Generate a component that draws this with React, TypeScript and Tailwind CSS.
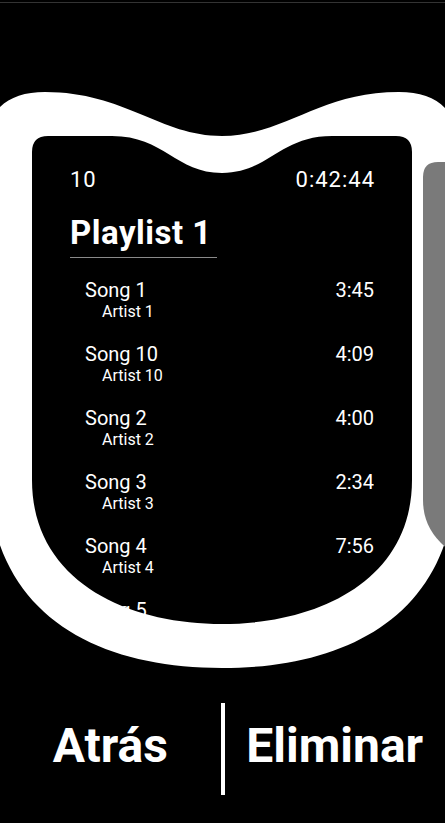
import React from "react";

type Song = {
  title: string;
  artist: string;
  duration: string;
};

const songs: Song[] = [
  { title: "Song 1", artist: "Artist 1", duration: "3:45" },
  { title: "Song 10", artist: "Artist 10", duration: "4:09" },
  { title: "Song 2", artist: "Artist 2", duration: "4:00" },
  { title: "Song 3", artist: "Artist 3", duration: "2:34" },
  { title: "Song 4", artist: "Artist 4", duration: "7:56" },
  { title: "Song 5", artist: "Artist 5", duration: "3:21" },
];

const CardFrame = () => {
  return (
    <svg
      className="pointer-events-none absolute left-0 top-0 z-10"
      width="445"
      height="700"
      viewBox="0 0 445 700"
    >
      {/* white frame with the card cut out of it */}
      <path
        fillRule="evenodd"
        fill="#ffffff"
        d="M -12 140 C -12 108 10 92 45 92 C 125 92 160 136 222 136 C 284 136 319 92 399 92 C 434 92 456 108 456 140 L 456 470 C 456 610 354 668 222 668 C 90 668 -12 610 -12 470 Z
           M 32 152 Q 32 136 48 136 L 112 136 C 164 136 176 173 222 173 C 268 173 280 136 332 136 L 396 136 Q 412 136 412 152 L 412 480 C 412 580 319 624 222 624 C 125 624 32 580 32 480 Z"
      />
      {/* next playlist peeking in */}
      <path
        fill="#7a7a7a"
        d="M 423 177 Q 423 162 438 162 L 470 162 L 470 560 L 452 552 Q 423 532 423 500 Z"
      />
    </svg>
  );
};

const App = () => {
  const [selected] = React.useState(0);

  return (
    <div className="relative w-[445px] h-[823px] overflow-hidden bg-black text-white font-['Roboto','Noto_Sans',sans-serif]">
      <div className="h-[2px]" />
      <div className="h-px bg-[#333333]" />

      <div className="h-[700px]">
        <div className="pt-[165px] pl-[70px] pr-[71px]">
          <div className="flex justify-between text-[22px] leading-[24px] tracking-[1px]">
            <span>10</span>
            <span className="mr-[-1px]">0:42:44</span>
          </div>
          <h1 className="mt-[22px] w-[147px] border-b border-[#8a8a8a] pb-[6px] text-[33px] leading-[37px] font-bold tracking-[0.5px]">
            Playlist {selected + 1}
          </h1>
          <ul className="mt-[20px] h-[362px] overflow-hidden flex flex-col gap-[20px]">
            {songs.map((song) => (
              <li key={song.title} className="flex justify-between pl-[15px]">
                <div className="flex flex-col">
                  <span className="text-[20px] leading-[24px]">{song.title}</span>
                  <span className="pl-[17px] text-[16px] leading-[20px]">{song.artist}</span>
                </div>
                <span className="text-[20px] leading-[24px]">{song.duration}</span>
              </li>
            ))}
          </ul>
        </div>
      </div>

      <CardFrame />

      <div className="flex h-[92px] items-stretch">
        <button type="button" className="flex flex-1 items-center justify-center">
          <span className="mb-[6px] text-[48px] leading-[56px] font-bold">Atrás</span>
        </button>
        <div className="w-[4px] bg-white" />
        <button type="button" className="flex flex-1 items-center justify-center">
          <span className="mb-[6px] text-[48px] leading-[56px] font-bold">Eliminar</span>
        </button>
      </div>
    </div>
  );
};

export default App;
